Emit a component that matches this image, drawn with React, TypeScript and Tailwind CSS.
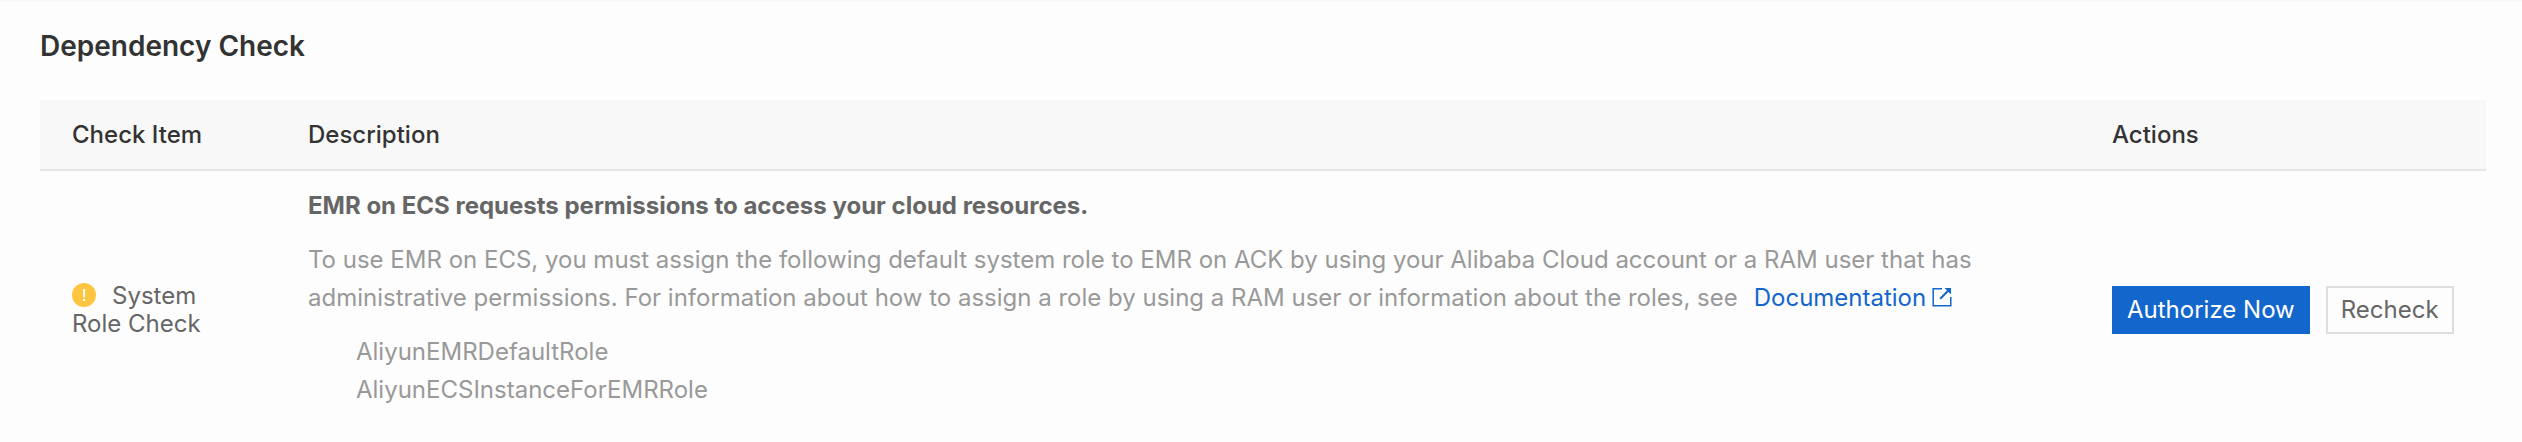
import React from "react";

const roles: string[] = ["AliyunEMRDefaultRole", "AliyunECSInstanceForEMRRole"];

function WarningIcon() {
  return (
    <svg viewBox="0 0 24 24" className="mr-4 inline-block size-6 align-[-3px]" aria-hidden="true">
      <circle cx="12" cy="12" r="12" fill="#ffc440" />
      <path d="M11 6h2.2l-.3 8.6h-1.6z" fill="#fff" />
      <rect x="11" y="16" width="2.2" height="2" fill="#fff" />
    </svg>
  );
}

function ExternalLinkIcon() {
  return (
    <svg
      viewBox="0 0 20 20"
      className="ml-[6px] inline-block size-5 align-[-1px]"
      fill="none"
      stroke="currentColor"
      aria-hidden="true"
    >
      <path d="M10 1.8H1.2V18.8H18.8V10" strokeWidth="1.5" />
      <path d="M8.2 11.8L17 3" strokeWidth="2" />
      <path d="M12.6 1H19V7.4z" fill="currentColor" stroke="none" />
    </svg>
  );
}

export default function App() {
  return (
    <main className="min-h-screen border-t-2 border-[#f7f7f7] bg-[#fdfdfd] pl-10 pr-9 pt-6 font-['Inter',sans-serif] text-[24px] text-[#666]">
      <h1 className="mb-[34px] text-[28px] font-semibold leading-10 text-[#333]">Dependency Check</h1>
      <table className="w-full table-fixed border-collapse text-left">
        <colgroup>
          <col className="w-[236px]" />
          <col />
          <col className="w-[406px]" />
        </colgroup>
        <thead className="bg-[#f8f8f8] text-[#333]">
          <tr className="h-[70px] border-b-2 border-[#e5e5e5]">
            <th className="px-8 font-medium">Check Item</th>
            <th className="px-8 font-medium">Description</th>
            <th className="px-8 font-medium">Actions</th>
          </tr>
        </thead>
        <tbody>
          <tr>
            <td className="px-8 pt-1 align-middle leading-7">
              <WarningIcon />
              System Role Check
            </td>
            <td className="px-8 pb-9 pt-4">
              <p className="font-bold leading-[38px]">
                EMR on ECS requests permissions to access your cloud resources.
              </p>
              <p className="mt-4 max-w-[1680px] leading-[38px] text-[#999]">
                <span>
                  To use EMR on ECS, you must assign the following default system role to EMR on ACK by using
                  your Alibaba Cloud account or a RAM user that has{" "}
                </span>
                <span className="inline-block">
                  administrative permissions. For information about how to assign a role by using a RAM user or
                  information about the roles, see
                </span>
                <a href="#documentation" className="ml-4 inline-block whitespace-nowrap text-[#1366cc]">
                  Documentation
                  <ExternalLinkIcon />
                </a>
              </p>
              <ul className="mt-4 pl-12 leading-[38px] text-[#999]">
                {roles.map((role) => (
                  <li key={role}>{role}</li>
                ))}
              </ul>
            </td>
            <td className="px-8 pt-1 align-middle">
              <div className="flex gap-4 whitespace-nowrap">
                <button type="button" className="h-12 border-2 border-[#1366cc] bg-[#1366cc] px-[13px] text-white">
                  Authorize Now
                </button>
                <button type="button" className="h-12 border-2 border-[#dedede] px-[13px]">
                  Recheck
                </button>
              </div>
            </td>
          </tr>
        </tbody>
      </table>
    </main>
  );
}
